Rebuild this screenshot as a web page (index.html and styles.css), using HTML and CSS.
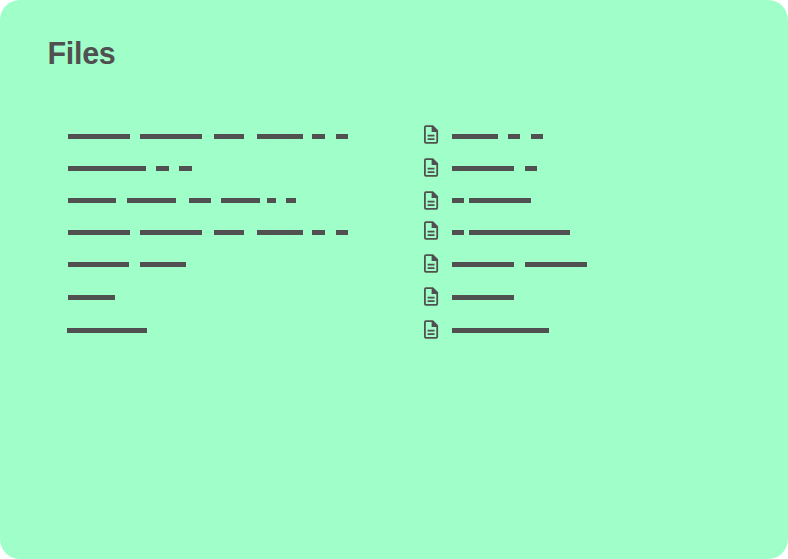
FILE: index.html
```html
<!DOCTYPE html>
<html lang="en">
<head>
<meta charset="utf-8">
<title>Files</title>
<link rel="stylesheet" href="styles.css">
</head>
<body>
<main class="panel">
  <h1 class="title">Files</h1>
  <div class="columns">
    <div class="list list-names" id="names"></div>
    <div class="icons" id="icons"></div>
    <div class="list" id="details"></div>
  </div>
</main>
<svg width="0" height="0" class="defs">
  <symbol id="doc" viewBox="0 0 16 20">
    <path d="M2.9 2.2H9.7L14.2 6.7V17.8Q14.2 18.8 13.2 18.8H2.9Q1.9 18.8 1.9 17.8V3.2Q1.9 2.2 2.9 2.2Z" fill="none" stroke="#505050" stroke-width="1.8" stroke-linejoin="round"/>
    <path d="M8.6 2H10L14.6 6.6V8H8.6Z" fill="#505050"/>
    <path d="M4.6 11.6H11.5M4.6 15.1H11.5" stroke="#505050" stroke-width="1.6"/>
  </symbol>
</svg>
<script src="script.js"></script>
</body>
</html>
```
FILE: styles.css
```css
body {
  margin: 0;
  background: #fff;
}
.panel {
  box-sizing: border-box;
  width: 788px;
  height: 559px;
  padding: 36px 47px 0;
  border-radius: 20px;
  background: #a0ffc8;
  color: #505050;
}
.title {
  margin: 0;
  padding-left: 0.5px;
  font: bold 30.5px/34px "Liberation Sans", Arial, sans-serif;
  letter-spacing: -0.3px;
}
.columns {
  display: grid;
  grid-template-columns: 357px 29px 1fr;
  align-items: start;
  margin: 54px 0 0 19px;
}
.list {
  display: flex;
  flex-direction: column;
  gap: 27px;
  padding-top: 10px;
}
.list-names {
  padding-left: 2px;
}
.row {
  display: flex;
  height: 5px;
}
.row:nth-child(n+6) {
  margin-top: 1px;
}
.list-names .row:last-child {
  margin-left: -1px;
}
.bar {
  flex: none;
  background: #505050;
}
.icons {
  display: flex;
  flex-direction: column;
  gap: 13px;
}
.icon {
  display: block;
  width: 16px;
  height: 20px;
}
.icon:nth-child(4) {
  margin-top: -3px;
}
.defs {
  position: absolute;
}
```
FILE: script.js
```js
// Each row lists alternating bar widths and gaps.
const names = [
  [62, 10, 62, 12, 30, 13, 46, 9, 13, 11, 12],
  [78, 10, 13, 10, 13],
  [48, 11, 49, 13, 22, 10, 39, 7, 9, 10, 10],
  [62, 10, 62, 12, 30, 13, 46, 9, 13, 11, 12],
  [61, 11, 46],
  [47],
  [80]
];
const details = [
  [46, 10, 12, 11, 12],
  [62, 11, 12],
  [12, 5, 62],
  [12, 5, 101],
  [62, 11, 62],
  [62],
  [97]
];

function fill(id, rows) {
  document.getElementById(id).innerHTML = rows.map(row =>
    '<div class="row">' + row.map((w, i) =>
      `<span class="${i % 2 ? 'space' : 'bar'}" style="width:${w}px"></span>`
    ).join('') + '</div>'
  ).join('');
}

fill('names', names);
fill('details', details);
document.getElementById('icons').innerHTML =
  details.map(() => '<svg class="icon"><use href="#doc"/></svg>').join('');
```
